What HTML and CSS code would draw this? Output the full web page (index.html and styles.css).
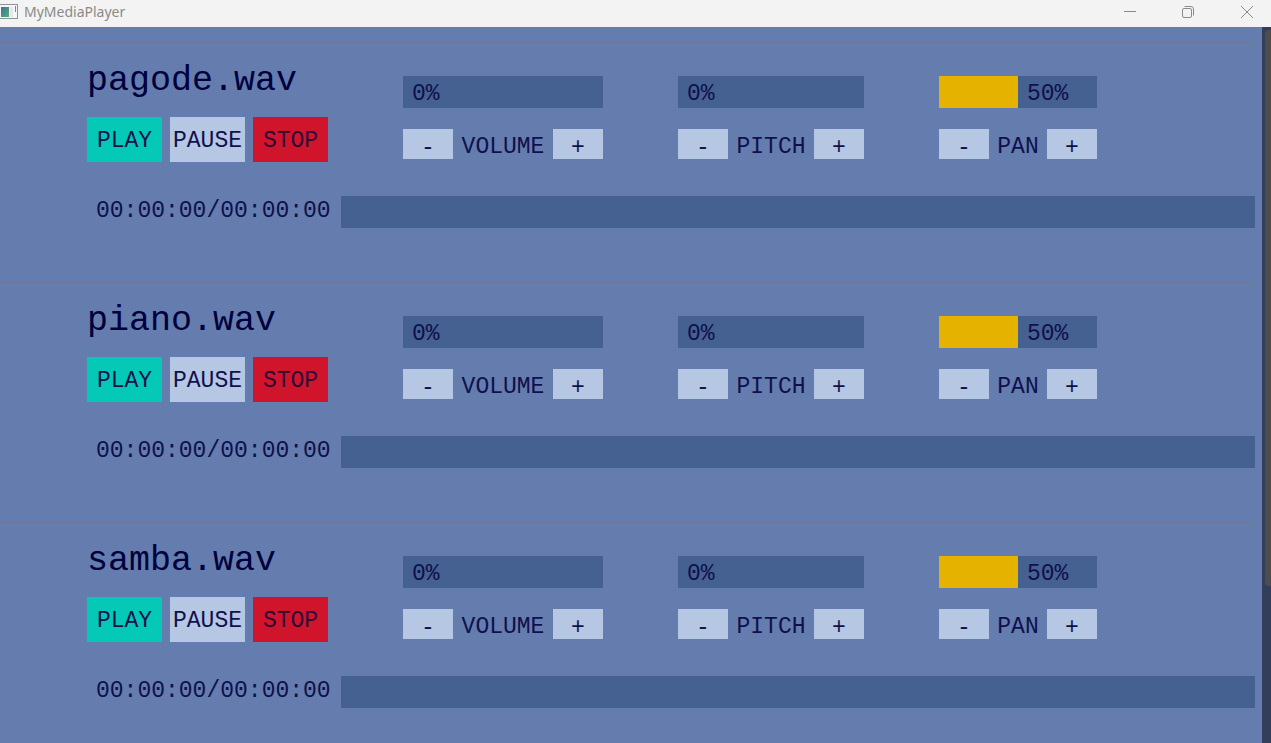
FILE: index.html
```html
<!DOCTYPE html>
<html lang="en">
<head>
<meta charset="utf-8">
<title>MyMediaPlayer</title>
<link rel="stylesheet" href="styles.css">
</head>
<body>
<header class="titlebar">
  <svg class="app-icon" width="19" height="16" viewBox="0 0 19 16" aria-hidden="true">
    <defs>
      <linearGradient id="screen" x1="0" y1="0" x2="1" y2="1">
        <stop offset="0" stop-color="#3c7396"/><stop offset="1" stop-color="#55ad78"/>
      </linearGradient>
    </defs>
    <rect x="0" y="0" width="18" height="15" fill="#8b939b"/>
    <rect x="0" y="1" width="17" height="13" fill="#f4f6f7"/>
    <rect x="1" y="3" width="8" height="10" fill="url(#screen)"/>
    <rect x="10" y="3" width="3" height="10" fill="#e4e8ea"/>
    <rect x="15" y="2" width="1" height="6" fill="#4fa389"/>
  </svg>
  <h1 class="app-name">MyMediaPlayer</h1>
  <div class="window-controls">
    <button class="window-button" aria-label="Minimize">
      <svg width="12" height="12" viewBox="0 0 12 12"><path d="M0 5.5H12" /></svg>
    </button>
    <button class="window-button" aria-label="Restore">
      <svg width="12" height="12" viewBox="0 0 12 12"><rect x=".5" y="2.5" width="9" height="9" rx="1.5"/><path d="M2.5 .5H9Q11.5 .5 11.5 3V9.5"/></svg>
    </button>
    <button class="window-button" aria-label="Close">
      <svg width="12" height="12" viewBox="0 0 12 12"><path d="M0 0L12 12M12 0L0 12"/></svg>
    </button>
  </div>
</header>
<div class="viewport">
  <main class="tracks">
    <section class="track">
      <div class="decks">
        <div class="deck">
          <h2 class="track-name">pagode.wav</h2>
          <div class="transport">
            <button class="action play">PLAY</button>
            <button class="action pause">PAUSE</button>
            <button class="action stop">STOP</button>
          </div>
        </div>
        <div class="control volume">
          <div class="meter" role="progressbar" aria-label="Volume" aria-valuenow="0"><div class="fill" style="width:0%"></div><span class="value">0%</span></div>
          <div class="stepper"><button class="step">-</button><span class="label">VOLUME</span><button class="step">+</button></div>
        </div>
        <div class="control pitch">
          <div class="meter" role="progressbar" aria-label="Pitch" aria-valuenow="0"><div class="fill" style="width:0%"></div><span class="value">0%</span></div>
          <div class="stepper"><button class="step">-</button><span class="label">PITCH</span><button class="step">+</button></div>
        </div>
        <div class="control pan">
          <div class="meter" role="progressbar" aria-label="Pan" aria-valuenow="50"><div class="fill" style="width:50%"></div><span class="value">50%</span></div>
          <div class="stepper"><button class="step">-</button><span class="label">PAN</span><button class="step">+</button></div>
        </div>
      </div>
      <div class="timeline"><span class="time">00:00:00/00:00:00</span><div class="meter seek" role="progressbar" aria-label="Position" aria-valuenow="0"></div></div>
    </section>
    <section class="track">
      <div class="decks">
        <div class="deck">
          <h2 class="track-name">piano.wav</h2>
          <div class="transport">
            <button class="action play">PLAY</button>
            <button class="action pause">PAUSE</button>
            <button class="action stop">STOP</button>
          </div>
        </div>
        <div class="control volume">
          <div class="meter" role="progressbar" aria-label="Volume" aria-valuenow="0"><div class="fill" style="width:0%"></div><span class="value">0%</span></div>
          <div class="stepper"><button class="step">-</button><span class="label">VOLUME</span><button class="step">+</button></div>
        </div>
        <div class="control pitch">
          <div class="meter" role="progressbar" aria-label="Pitch" aria-valuenow="0"><div class="fill" style="width:0%"></div><span class="value">0%</span></div>
          <div class="stepper"><button class="step">-</button><span class="label">PITCH</span><button class="step">+</button></div>
        </div>
        <div class="control pan">
          <div class="meter" role="progressbar" aria-label="Pan" aria-valuenow="50"><div class="fill" style="width:50%"></div><span class="value">50%</span></div>
          <div class="stepper"><button class="step">-</button><span class="label">PAN</span><button class="step">+</button></div>
        </div>
      </div>
      <div class="timeline"><span class="time">00:00:00/00:00:00</span><div class="meter seek" role="progressbar" aria-label="Position" aria-valuenow="0"></div></div>
    </section>
    <section class="track">
      <div class="decks">
        <div class="deck">
          <h2 class="track-name">samba.wav</h2>
          <div class="transport">
            <button class="action play">PLAY</button>
            <button class="action pause">PAUSE</button>
            <button class="action stop">STOP</button>
          </div>
        </div>
        <div class="control volume">
          <div class="meter" role="progressbar" aria-label="Volume" aria-valuenow="0"><div class="fill" style="width:0%"></div><span class="value">0%</span></div>
          <div class="stepper"><button class="step">-</button><span class="label">VOLUME</span><button class="step">+</button></div>
        </div>
        <div class="control pitch">
          <div class="meter" role="progressbar" aria-label="Pitch" aria-valuenow="0"><div class="fill" style="width:0%"></div><span class="value">0%</span></div>
          <div class="stepper"><button class="step">-</button><span class="label">PITCH</span><button class="step">+</button></div>
        </div>
        <div class="control pan">
          <div class="meter" role="progressbar" aria-label="Pan" aria-valuenow="50"><div class="fill" style="width:50%"></div><span class="value">50%</span></div>
          <div class="stepper"><button class="step">-</button><span class="label">PAN</span><button class="step">+</button></div>
        </div>
      </div>
      <div class="timeline"><span class="time">00:00:00/00:00:00</span><div class="meter seek" role="progressbar" aria-label="Position" aria-valuenow="0"></div></div>
    </section>
  </main>
  <div class="scrollbar"><div class="thumb"></div></div>
</div>
</body>
</html>
```
FILE: styles.css
```css
* { box-sizing: border-box; }

body {
  margin: 0;
  height: 100vh;
  display: flex;
  flex-direction: column;
  overflow: hidden;
  background: #647dae;
  color: #10104c;
  font-family: "Liberation Mono", monospace;
  font-size: 23px;
  line-height: 30px;
}

button {
  border: 0;
  border-radius: 0;
  padding: 0;
  font: inherit;
  color: inherit;
}

/* Window title bar */
.titlebar {
  flex: none;
  display: flex;
  align-items: center;
  height: 27px;
  padding-bottom: 3px;
  background: #f3f3f3;
  color: #8a8a8a;
}

.app-name {
  margin: 0 auto 0 5px;
  font: 400 14px/24px "Noto Sans", sans-serif;
}

.window-controls { display: flex; }

.window-button {
  width: 58px;
  height: 24px;
  display: grid;
  place-items: center;
  background: none;
}

.window-button:last-child { width: 48px; margin-left: 6px; }

.window-button svg {
  fill: none;
  stroke: #8a8a8a;
  stroke-width: 1;
}

/* Scrolling list of tracks */
.viewport {
  flex: 1;
  min-height: 0;
  display: flex;
  gap: 7px;
}

.tracks {
  flex: 1;
  overflow: hidden;
  padding-top: 15px;
}

.track {
  border-top: 1px solid #6e7796;
  padding: 18px 0 54px 87px;
}

.decks {
  display: flex;
  align-items: flex-start;
  gap: 75px;
}

.track-name {
  margin: 0 0 16px;
  font-size: 35px;
  font-weight: 400;
  line-height: 40px;
  color: #00003c;
}

.transport { display: flex; gap: 8px; }

.action {
  width: 75px;
  height: 45px;
  padding-top: 2px;
}

.play { background: #04c9b7; }
.pause { background: #b5c7e2; }
.stop { background: #d0142b; color: #2c0838; }

.control { padding-top: 15px; }
.volume { width: 200px; }
.pitch { width: 186px; }
.pan { width: 158px; }

.meter {
  display: flex;
  height: 32px;
  background: #456191;
}

.fill { background: #e6b200; }

.value { padding: 3px 0 0 9px; }

.stepper {
  display: flex;
  justify-content: space-between;
  margin-top: 21px;
}

.step {
  width: 50px;
  height: 30px;
  padding-top: 4px;
  background: #b5c7e2;
}

.label { height: 30px; padding-top: 3px; }

.timeline {
  display: flex;
  margin-top: 34px;
}

.time { width: 254px; padding-left: 9px; }

.seek { flex: 1; }

.scrollbar {
  width: 9px;
  padding: 3px 0 0 3px;
  background: #333e5a;
}

.thumb {
  height: 78%;
  border-radius: 4px 0 0 4px;
  background: #4d4d4e;
}
```
